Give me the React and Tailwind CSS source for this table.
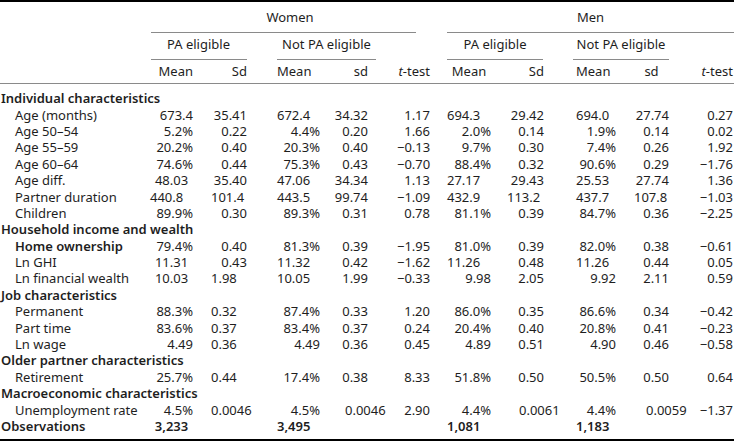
import React from 'react'

// column boxes: label is 150px, then each data column (margin = gap before it)
const cols = [
  'w-[43px]',
  'ml-[18px] w-[36px]',
  'ml-[30px] w-[43px]',
  'ml-[13px] w-[35px]',
  'ml-[29px] w-[33px]',
  'ml-[17px] w-[44px]',
  'ml-[16px] w-[37px]',
  'ml-[32px] w-[40px]',
  'ml-[18px] w-[35px]',
  'ml-[30px] w-[34px]',
]

const align = {
  r: 'text-right',
  l: 'text-left',
  c: 'text-center',
  i: 'text-left pl-[12px]',
}

const sections = [
  {
    title: 'Individual characteristics',
    rows: [
      ['Age (months)', '673.4', '35.41', 'l:672.4', '34.32', '1.17', 'l:694.3', '29.42', 'l:694.0', '27.74', '0.27'],
      ['Age 50–54', '5.2%', '0.22', '4.4%', '0.20', '1.66', '2.0%', '0.14', '1.9%', '0.14', '0.02'],
      ['Age 55–59', '20.2%', '0.40', '20.3%', '0.40', '−0.13', '9.7%', '0.30', '7.4%', '0.26', '1.92'],
      ['Age 60–64', '74.6%', '0.44', '75.3%', '0.43', '−0.70', '88.4%', '0.32', '90.6%', '0.29', '−1.76'],
      ['Age diff.', 'c:48.03', '35.40', 'l:47.06', '34.34', '1.13', 'l:27.17', '29.43', 'l:25.53', '27.74', '1.36'],
      ['Partner duration', 'l:440.8', 'l:101.4', 'l:443.5', '99.74', '−1.09', 'l:432.9', 'l:113.2', 'l:437.7', 'l:107.8', '−1.03'],
      ['Children', '89.9%', '0.30', '89.3%', '0.31', '0.78', '81.1%', '0.39', '84.7%', '0.36', '−2.25'],
    ],
  },
  {
    title: 'Household income and wealth',
    rows: [
      ['Home ownership', '79.4%', '0.40', '81.3%', '0.39', '−1.95', '81.0%', '0.39', '82.0%', '0.38', '−0.61', true],
      ['Ln GHI', 'c:11.31', '0.43', 'l:11.32', '0.42', '−1.62', 'l:11.26', '0.48', 'l:11.26', '0.44', '0.05'],
      ['Ln financial wealth', 'c:10.03', 'l:1.98', 'l:10.05', '1.99', '−0.33', '9.98', '2.05', '9.92', '2.11', '0.59'],
    ],
  },
  {
    title: 'Job characteristics',
    rows: [
      ['Permanent', '88.3%', 'l:0.32', '87.4%', '0.33', '1.20', '86.0%', '0.35', '86.6%', '0.34', '−0.42'],
      ['Part time', '83.6%', 'l:0.37', '83.4%', '0.37', '0.24', '20.4%', '0.40', '20.8%', '0.41', '−0.23'],
      ['Ln wage', '4.49', 'l:0.36', '4.49', '0.36', '0.45', '4.89', '0.51', '4.90', '0.46', '−0.58'],
    ],
  },
  {
    title: 'Older partner characteristics',
    rows: [['Retirement', '25.7%', 'l:0.44', '17.4%', '0.38', '8.33', '51.8%', '0.50', '50.5%', '0.50', '0.64']],
  },
  {
    title: 'Macroeconomic characteristics',
    rows: [['Unemployment rate', '4.5%', 'l:0.0046', '4.5%', 'i:0.0046', '2.90', '4.4%', 'i:0.0061', '4.4%', 'i:0.0059', '−1.37']],
  },
]

function Cell({ value, i }) {
  let a = 'r'
  let t = value
  if (value.length > 2 && value[1] === ':') {
    a = value[0]
    t = value.slice(2)
  }
  return <div className={`${cols[i]} shrink-0 whitespace-nowrap ${align[a]}`}>{t}</div>
}

function Row({ row, bold, indent }) {
  const label = row[0]
  const vals = row.slice(1, 11)
  return (
    <div className={`flex h-[16.4px] items-center ${bold ? 'font-semibold' : ''}`}>
      <div className={`w-[150px] shrink-0 whitespace-nowrap ${indent ? 'pl-[15px]' : 'pl-[1px]'} ${row[11] ? 'font-semibold' : ''}`}>
        {label}
      </div>
      {vals.map((v, i) => (
        <Cell key={i} value={v} i={i} />
      ))}
    </div>
  )
}

export default function App() {
  return (
    <div className="w-[734px] h-[442px] bg-white text-[#1e1e1e] text-[13px] leading-[16px] font-['Noto_Sans',sans-serif]">
      <div className="border-t-2 border-b-2 border-black pb-[5px]">
        {/* header row 1 */}
        <div className="flex">
          <div className="w-[150px] shrink-0" />
          <div className="w-[280px] shrink-0 flex flex-col">
            <div className="pt-[7px] pb-[7px] text-center">Women</div>
            <div className="h-px bg-[#8a8a8a] ml-[1px] mr-[14px]" />
          </div>
          <div className="ml-[17px] w-[287px] shrink-0 flex flex-col">
            <div className="pt-[7px] pb-[7px] text-center">Men</div>
            <div className="h-px bg-[#8a8a8a]" />
          </div>
        </div>
        {/* header row 2 */}
        <div className="flex">
          <div className="w-[150px] shrink-0" />
          <div className="w-[97px] shrink-0 flex flex-col">
            <div className="pt-[3px] pb-[7px] text-center">PA eligible</div>
            <div className="h-px bg-[#8a8a8a] ml-[1px]" />
          </div>
          <div className="ml-[30px] w-[99px] shrink-0 flex flex-col">
            <div className="pt-[3px] pb-[7px] text-center">Not PA eligible</div>
            <div className="h-px bg-[#8a8a8a]" />
          </div>
          <div className="ml-[71px] w-[96px] shrink-0 flex flex-col">
            <div className="pt-[3px] pb-[7px] text-center">PA eligible</div>
            <div className="h-px bg-[#8a8a8a]" />
          </div>
          <div className="ml-[30px] w-[96px] shrink-0 flex flex-col">
            <div className="pt-[3px] pb-[7px] text-center">Not PA eligible</div>
            <div className="h-px bg-[#8a8a8a]" />
          </div>
        </div>
        {/* header row 3 */}
        <div className="flex pt-[3px] pb-[4px] border-b border-[#8a8a8a]">
          <div className="w-[150px] shrink-0" />
          {['Mean', 'Sd', 'l:Mean', 'sd', null, 'c:Mean', 'Sd', 'l:Mean', 'c:sd', null].map((h, i) =>
            h === null ? (
              <div key={i} className={`${cols[i]} shrink-0 whitespace-nowrap text-right`}>
                <span className="italic">t</span>-test
              </div>
            ) : (
              <Cell key={i} value={h} i={i} />
            )
          )}
        </div>
        {/* body */}
        <div className="pt-[6px]">
          {sections.map((s) => (
            <div key={s.title}>
              <div className="h-[16.4px] flex items-center pl-[1px] font-semibold whitespace-nowrap">{s.title}</div>
              {s.rows.map((r) => (
                <Row key={r[0]} row={r} indent />
              ))}
            </div>
          ))}
          <Row row={['Observations', 'c:3,233', '', 'l:3,495', '', '', 'l:1,081', '', 'l:1,183', '', '']} bold />
        </div>
      </div>
    </div>
  )
}
